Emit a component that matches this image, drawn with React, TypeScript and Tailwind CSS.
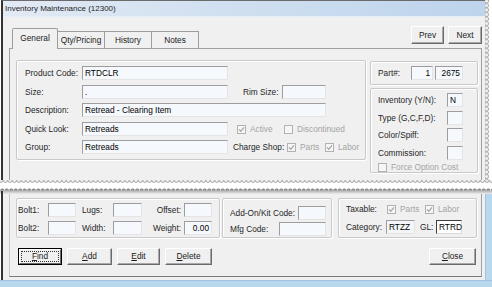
import React from "react";

type InpProps = {
  cls: string;
  children?: React.ReactNode;
  right?: boolean;
  tone?: "w" | "g" | "d";
};

function Inp({ cls, children, right, tone }: InpProps) {
  const bg = tone === "w" || tone === "d" ? "bg-white" : tone === "g" ? "bg-[#f3f5f8]" : "bg-[#f5f8fc]";
  const bd =
    tone === "d"
      ? "border-t-[#3c3c3c] border-l-[#3c3c3c] border-r-[#d8d8d8] border-b-[#d8d8d8]"
      : "border-t-[#9d9d9d] border-l-[#9d9d9d] border-r-[#e4e4e4] border-b-[#e4e4e4]";
  return (
    <div
      className={`${cls} ${bg} ${bd} h-[14px] shrink-0 flex items-center border ${
        right ? "justify-end pr-[2px]" : "pl-[2px]"
      } text-black leading-none whitespace-nowrap`}
    >
      {children}
    </div>
  );
}

function Cb({ checked }: { checked?: boolean }) {
  return (
    <span className="w-[9px] h-[9px] shrink-0 border border-[#b2b2b2] bg-[#f6f6f6] flex items-center justify-center">
      {checked && (
        <svg width="7" height="7" viewBox="0 0 7 7">
          <path d="M1 3.4 L2.8 5.3 L6 1.3" stroke="#a6a6a6" strokeWidth="1.3" fill="none" />
        </svg>
      )}
    </span>
  );
}

function Lbl({ cls, children }: { cls: string; children: React.ReactNode }) {
  return <span className={`${cls} shrink-0 text-[#262626] whitespace-nowrap`}>{children}</span>;
}

function Dis({ children }: { children: React.ReactNode }) {
  return <span className="ml-[4px] text-[#a4a4a4] whitespace-nowrap">{children}</span>;
}

function Btn({ cls, children }: { cls: string; children: React.ReactNode }) {
  return (
    <div
      className={`${cls} shrink-0 flex items-center justify-center bg-[#f0f0f0] border border-t-white border-l-white border-r-[#6a6a6a] border-b-[#6a6a6a] shadow-[inset_-1px_-1px_0_#a8a8a8] text-[#1a1a1a] whitespace-nowrap`}
    >
      {children}
    </div>
  );
}

function Box({ cls, children }: { cls: string; children: React.ReactNode }) {
  return (
    <div className={`${cls} shrink-0 border border-[#c9c9c9] rounded-[2px] shadow-[inset_1px_1px_0_#ffffff,1px_1px_0_#ffffff]`}>
      {children}
    </div>
  );
}

const topBumps = Array.from({ length: 110 }, (_, i) => i * 4.5 + 1);
const sideBumps = Array.from({ length: 41 }, (_, i) => i * 4.5 + 1);

function TearBand() {
  let d = "M0 14 L0 11";
  for (let i = 0; i < 110; i++) d += " a2.25 2.4 0 0 1 4.5 0";
  d += " L492 14 Z";
  return (
    <svg width="492" height="14" className="block shrink-0">
      <defs>
        <linearGradient id="tearsh" x1="0" y1="0" x2="0" y2="1">
          <stop offset="0" stopColor="#747474" />
          <stop offset="0.5" stopColor="#bcbcbc" />
          <stop offset="1" stopColor="#ececec" />
        </linearGradient>
      </defs>
      {topBumps.map((x) => (
        <circle key={x} cx={x} cy={0.4} r={2.1} fill="#ececec" stroke="#9a9a9a" strokeWidth={0.8} />
      ))}
      <path d={d} fill="url(#tearsh)" />
      <rect x="1" y="11" width="2" height="3" fill="#333333" />
    </svg>
  );
}

function TornRight() {
  return (
    <svg width="7" height="180" className="block shrink-0">
      {sideBumps.map((y) => (
        <circle key={y} cx={1.6} cy={y} r={2.1} fill="#ececec" stroke="#9c9c9c" strokeWidth={0.8} />
      ))}
    </svg>
  );
}

export default function App() {
  return (
    <div className="w-[492px] h-[287px] bg-white flex flex-col overflow-hidden font-['Liberation_Sans',Arial,sans-serif] text-[8.3px] leading-none text-[#222]">
      {/* upper piece */}
      <div className="flex h-[180px] shrink-0">
        <div className="w-[485px] flex flex-col pl-[1px]">
          <div className="flex-1 flex flex-col border-l-2 border-t border-l-[#333333] border-t-[#6b6b6b] bg-[#f0f0f0]">
            <div className="h-[16px] shrink-0 flex items-center pl-[2px] bg-linear-to-r from-[#e2eaf4] via-[#cfdff0] to-[#bdd4ec] border-b border-b-[#e6eef7] text-[8px] text-[#1e1e1e]">
              Inventory Maintenance (12300)
            </div>
            {/* tabs row */}
            <div className="h-[31px] shrink-0 flex items-end">
              <div className="ml-[9px] flex items-end relative z-10">
                <div className="w-[46px] h-[21px] mb-[-1px] bg-[#f0f0f0] border border-b-0 border-[#9c9c9c] rounded-t-[2px] flex items-center justify-center pb-[2px]">
                  General
                </div>
                <div className="w-[47px] h-[17px] border-t border-r border-[#9c9c9c] flex items-center justify-center">
                  Qty/Pricing
                </div>
                <div className="w-[47px] h-[17px] border-t border-r border-[#9c9c9c] flex items-center justify-center">
                  History
                </div>
                <div className="w-[47px] h-[17px] border-t border-r border-[#9c9c9c] flex items-center justify-center">
                  Notes
                </div>
              </div>
              <div className="flex-1" />
              <div className="self-start mt-[9px] mr-[3px] flex gap-[4px]">
                <Btn cls="w-[33px] h-[18px]">Prev</Btn>
                <Btn cls="w-[34px] h-[18px]">Next</Btn>
              </div>
            </div>
            {/* pane */}
            <div className="ml-[6px] w-[473px] flex-1 border-l border-t border-r border-[#a0a0a0] flex items-start pt-[11px]">
              <Box cls="ml-[6px] w-[350px] h-[100px] pt-[5px] pl-[8px] flex flex-col">
                <div className="h-[14px] flex items-center">
                  <Lbl cls="w-[57px]">Product Code:</Lbl>
                  <Inp cls="w-[146px]">RTDCLR</Inp>
                </div>
                <div className="h-[14px] mt-[5px] flex items-center">
                  <Lbl cls="w-[57px]">Size:</Lbl>
                  <Inp cls="w-[146px]">.</Inp>
                  <Lbl cls="ml-[15px] w-[39px]">Rim Size:</Lbl>
                  <Inp cls="w-[44px]" />
                </div>
                <div className="h-[14px] mt-[4px] flex items-center">
                  <Lbl cls="w-[57px]">Description:</Lbl>
                  <Inp cls="w-[244px]">Retread - Clearing Item</Inp>
                </div>
                <div className="h-[14px] mt-[5px] flex items-center">
                  <Lbl cls="w-[57px]">Quick Look:</Lbl>
                  <Inp cls="w-[146px]">Retreads</Inp>
                  <div className="ml-[9px] w-[47px] flex items-center">
                    <Cb checked />
                    <Dis>Active</Dis>
                  </div>
                  <div className="flex items-center">
                    <Cb />
                    <Dis>Discontinued</Dis>
                  </div>
                </div>
                <div className="h-[14px] mt-[4px] flex items-center">
                  <Lbl cls="w-[57px]">Group:</Lbl>
                  <Inp cls="w-[146px]">Retreads</Inp>
                  <Lbl cls="ml-[5px] w-[54px]">Charge Shop:</Lbl>
                  <div className="w-[38px] flex items-center">
                    <Cb checked />
                    <Dis>Parts</Dis>
                  </div>
                  <div className="flex items-center">
                    <Cb checked />
                    <Dis>Labor</Dis>
                  </div>
                </div>
              </Box>
              <div className="ml-[4px] w-[108px] flex flex-col">
                <Box cls="mt-[1px] w-[108px] h-[24px] pl-[7px] flex items-center">
                  <Lbl cls="w-[33px]">Part#:</Lbl>
                  <Inp cls="w-[22px]" right>1</Inp>
                  <Inp cls="ml-[2px] w-[28px]" right>2675</Inp>
                </Box>
                <Box cls="mt-[3px] w-[108px] h-[85px] pt-[4px] pl-[7px] flex flex-col">
                  <div className="h-[14px] flex items-center">
                    <Lbl cls="w-[69px]">Inventory (Y/N):</Lbl>
                    <Inp cls="w-[16px]">N</Inp>
                  </div>
                  <div className="h-[14px] mt-[4px] flex items-center">
                    <Lbl cls="w-[69px]">Type (G,C,F,D):</Lbl>
                    <Inp cls="w-[16px]" />
                  </div>
                  <div className="h-[14px] mt-[3px] flex items-center">
                    <Lbl cls="w-[69px]">Color/Spiff:</Lbl>
                    <Inp cls="w-[16px]" />
                  </div>
                  <div className="h-[14px] mt-[4px] flex items-center">
                    <Lbl cls="w-[69px]">Commission:</Lbl>
                    <Inp cls="w-[16px]" />
                  </div>
                  <div className="h-[10px] mt-[2px] flex items-center">
                    <Cb />
                    <Dis>Force Option Cost</Dis>
                  </div>
                </Box>
              </div>
            </div>
          </div>
        </div>
        <TornRight />
      </div>

      <TearBand />

      {/* lower piece */}
      <div className="flex flex-col flex-1">
        <div className="flex h-[86px] shrink-0">
          <div className="w-[1px] bg-white" />
          <div className="w-[2px] bg-[#333333]" />
          <div className="w-[482px] bg-[#f0f0f0] flex flex-col">
            <div className="ml-[6px] w-[473px] h-[83px] border-l border-r border-b border-l-[#c8c8c8] border-r-[#a0a0a0] border-b-[#7a7a7a] flex flex-col pt-[4px]">
              <div className="flex items-start">
                <Box cls="ml-[6px] w-[204px] h-[40px] pt-[4px] pl-[1px] flex flex-col">
                  <div className="h-[14px] flex items-center">
                    <Lbl cls="w-[30px]">Bolt1:</Lbl>
                    <Inp cls="w-[28px]" />
                    <Lbl cls="ml-[6px] w-[31px]">Lugs:</Lbl>
                    <Inp cls="w-[29px]" />
                    <Lbl cls="w-[42px] text-right pr-[3px]">Offset:</Lbl>
                    <Inp cls="w-[28px]" />
                  </div>
                  <div className="h-[14px] mt-[4px] flex items-center">
                    <Lbl cls="w-[30px]">Bolt2:</Lbl>
                    <Inp cls="w-[28px]" />
                    <Lbl cls="ml-[6px] w-[31px]">Width:</Lbl>
                    <Inp cls="w-[29px]" />
                    <Lbl cls="w-[42px] text-right pr-[3px]">Weight:</Lbl>
                    <Inp cls="w-[28px]" right>0.00</Inp>
                  </div>
                </Box>
                <Box cls="ml-[2px] w-[110px] h-[40px] pt-[7px] pl-[7px] flex flex-col">
                  <div className="h-[14px] flex items-center">
                    <Lbl cls="w-[68px]">Add-On/Kit Code:</Lbl>
                    <Inp cls="w-[28px]" />
                  </div>
                  <div className="h-[14px] mt-[2px] flex items-center">
                    <Lbl cls="w-[49px]">Mfg Code:</Lbl>
                    <Inp cls="w-[47px]" />
                  </div>
                </Box>
                <Box cls="ml-[6px] w-[139px] h-[40px] pt-[3px] pl-[7px] flex flex-col">
                  <div className="h-[14px] flex items-center">
                    <Lbl cls="w-[41px]">Taxable:</Lbl>
                    <div className="w-[38px] flex items-center">
                      <Cb checked />
                      <Dis>Parts</Dis>
                    </div>
                    <div className="flex items-center">
                      <Cb checked />
                      <Dis>Labor</Dis>
                    </div>
                  </div>
                  <div className="h-[14px] mt-[4px] flex items-center">
                    <Lbl cls="w-[40px]">Category:</Lbl>
                    <Inp cls="w-[29px]" tone="g">RTZZ</Inp>
                    <Lbl cls="ml-[5px] w-[16px]">GL:</Lbl>
                    <Inp cls="w-[26px]" tone="d">RTRD</Inp>
                  </div>
                </Box>
              </div>
              <div className="mt-[10px] h-[17px] flex items-center">
                <div className="ml-[8px] w-[44px] h-[17px] shrink-0 border border-black flex">
                  <div className="flex-1 bg-[#f0f0f0] border border-t-white border-l-white border-r-[#6a6a6a] border-b-[#6a6a6a] flex items-center justify-center p-[1px]">
                    <div className="w-full h-full border border-dotted border-[#333] flex items-center justify-center">
                      <span>
                        <span className="underline">F</span>ind
                      </span>
                    </div>
                  </div>
                </div>
                <Btn cls="ml-[5px] w-[45px] h-[17px]">
                  <span>
                    <span className="underline">A</span>dd
                  </span>
                </Btn>
                <Btn cls="ml-[5px] w-[43px] h-[17px]">
                  <span>
                    <span className="underline">E</span>dit
                  </span>
                </Btn>
                <Btn cls="ml-[5px] w-[47px] h-[17px]">
                  <span>
                    <span className="underline">D</span>elete
                  </span>
                </Btn>
                <div className="flex-1" />
                <Btn cls="mr-[5px] w-[47px] h-[17px]">
                  <span>
                    <span className="underline">C</span>lose
                  </span>
                </Btn>
              </div>
            </div>
          </div>
          <div className="w-[7px] bg-[#b8d8ee] border-l border-l-[#9ec4e2]" />
        </div>
        <div className="flex-1 bg-[#b8d8ee] border-t border-t-[#9ec4e2]" />
      </div>
    </div>
  );
}
